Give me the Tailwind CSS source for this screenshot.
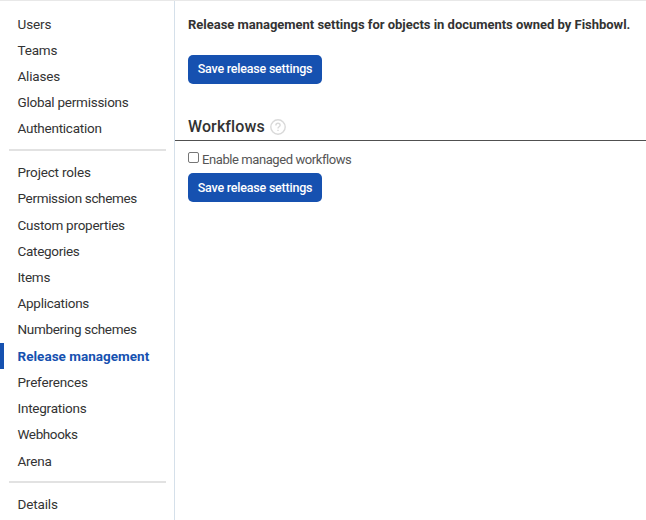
<!DOCTYPE html>
<html lang="en">
<head>
<meta charset="utf-8">
<title>Release management</title>
<script src="https://cdn.jsdelivr.net/npm/@tailwindcss/browser@4"></script>
</head>
<body class="bg-white">
<div class="flex h-[520px] w-[646px] overflow-hidden border-t border-[#e8e8e8] bg-white font-['Roboto','Liberation_Sans',sans-serif] text-[#333]">
  <nav class="w-[175px] shrink-0 border-r border-[#d5e0ea] pt-[9.5px] text-[13.5px] leading-[26.22px] whitespace-nowrap">
    <ul>
      <li class="pl-[17.5px]"><a class="tracking-[-0.1px]">Users</a></li>
      <li class="pl-[17.5px]"><a class="tracking-[-0.2px]">Teams</a></li>
      <li class="pl-[17.5px]"><a class="tracking-[-0.2px]">Aliases</a></li>
      <li class="pl-[17.5px]"><a class="tracking-[-0.25px]">Global permissions</a></li>
      <li class="pl-[17.5px]"><a class="tracking-[-0.25px]">Authentication</a></li>
    </ul>
    <hr class="mt-[7.5px] mr-2 mb-[8px] ml-[9px] h-[2px] border-0 bg-[#e2e2e2]">
    <ul>
      <li class="pl-[17.5px]"><a class="tracking-[-0.17px]">Project roles</a></li>
      <li class="pl-[17.5px]"><a class="tracking-[-0.34px]">Permission schemes</a></li>
      <li class="pl-[17.5px]"><a class="tracking-[-0.25px]">Custom properties</a></li>
      <li class="pl-[17.5px]"><a class="tracking-[-0.3px]">Categories</a></li>
      <li class="pl-[17.5px]"><a class="tracking-[-0.3px]">Items</a></li>
      <li class="pl-[17.5px]"><a class="tracking-[-0.27px]">Applications</a></li>
      <li class="pl-[17.5px]"><a class="tracking-[-0.31px]">Numbering schemes</a></li>
      <li class="border-l-4 border-[#1651b0] pl-[13.5px] font-bold text-[#1651b0]"><a class="tracking-[0.02px]">Release management</a></li>
      <li class="pl-[17.5px]"><a class="tracking-[-0.17px]">Preferences</a></li>
      <li class="pl-[17.5px]"><a class="tracking-[-0.24px]">Integrations</a></li>
      <li class="pl-[17.5px]"><a class="tracking-[-0.4px]">Webhooks</a></li>
      <li class="pl-[17.5px]"><a class="tracking-[-0.2px]">Arena</a></li>
    </ul>
    <hr class="mt-[7.5px] mr-2 mb-[8px] ml-[9px] h-[2px] border-0 bg-[#e2e2e2]">
    <ul>
      <li class="pl-[17.5px]"><a class="tracking-[-0.15px]">Details</a></li>
    </ul>
  </nav>
  <main class="min-w-0 flex-1 pt-[14px] whitespace-nowrap">
    <p class="pl-[13px] text-[13px] leading-5 font-bold"><span class="tracking-[-0.02px]">Release management settings for objects in documents owned by Fishbowl.</span></p>
    <button class="mt-[19.5px] ml-[13px] flex h-[29px] w-[134px] items-center justify-center rounded-[5px] bg-[#1651b0] pt-px text-[12.5px] font-medium text-white"><span class="tracking-[-0.22px]">Save release settings</span></button>
    <h2 class="mt-[30.5px] flex h-[27px] items-center gap-[5px] border-b border-[#505050] pl-[13px] text-[16px] font-medium">
      <span class="tracking-[0.1px]">Workflows</span>
      <svg class="size-4" viewBox="0 0 16 16" fill="none" stroke="#d9d9d9" stroke-width="1.4"><circle cx="8" cy="8" r="7.2"/><path d="M5.9 6.4C5.9 5 6.8 4.3 8 4.3s2.1.7 2.1 1.9c0 1.5-2.1 1.6-2.1 3.2M8 10.7v1.4"/></svg>
    </h2>
    <label class="mt-[9px] flex h-5 items-start pl-[13px] text-[13px] leading-5 text-[#555]">
      <input type="checkbox" class="mt-[2px] mr-[3px] size-[11px] appearance-none rounded-[2px] border border-[#767676] bg-white">
      <span class="tracking-[-0.42px]">Enable managed workflows</span>
    </label>
    <button class="mt-[2.5px] ml-[13px] flex h-[29px] w-[134px] items-center justify-center rounded-[5px] bg-[#1651b0] pt-[2px] text-[12.5px] font-medium text-white"><span class="tracking-[-0.22px]">Save release settings</span></button>
  </main>
</div>
</body>
</html>
